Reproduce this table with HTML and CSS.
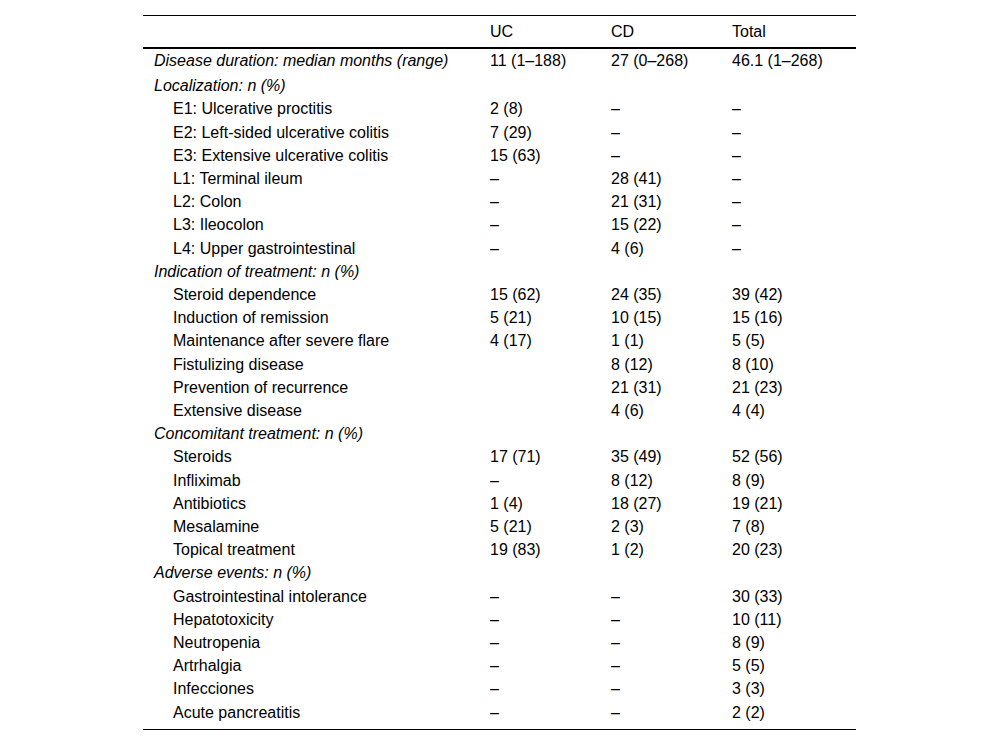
FILE: index.html
```html
<!DOCTYPE html>
<html>
<head>
<meta charset="utf-8">
<link rel="stylesheet" href="styles.css">
</head>
<body>
<div class="wrap">
<table class="data">
<colgroup><col class="c-label"><col class="c-num"><col class="c-num"><col class="c-total"></colgroup>
<thead>
<tr><th></th><th>UC</th><th>CD</th><th>Total</th></tr>
</thead>
<tbody>
<tr class="first"><td class="grp">Disease duration: median months (range)</td><td>11 (1–188)</td><td>27 (0–268)</td><td>46.1 (1–268)</td></tr>
<tr><td class="grp">Localization: n (%)</td><td></td><td></td><td></td></tr>
<tr><td class="sub">E1: Ulcerative proctitis</td><td>2 (8)</td><td>–</td><td>–</td></tr>
<tr><td class="sub">E2: Left-sided ulcerative colitis</td><td>7 (29)</td><td>–</td><td>–</td></tr>
<tr><td class="sub">E3: Extensive ulcerative colitis</td><td>15 (63)</td><td>–</td><td>–</td></tr>
<tr><td class="sub">L1: Terminal ileum</td><td>–</td><td>28 (41)</td><td>–</td></tr>
<tr><td class="sub">L2: Colon</td><td>–</td><td>21 (31)</td><td>–</td></tr>
<tr><td class="sub">L3: Ileocolon</td><td>–</td><td>15 (22)</td><td>–</td></tr>
<tr><td class="sub">L4: Upper gastrointestinal</td><td>–</td><td>4 (6)</td><td>–</td></tr>
<tr><td class="grp">Indication of treatment: n (%)</td><td></td><td></td><td></td></tr>
<tr><td class="sub">Steroid dependence</td><td>15 (62)</td><td>24 (35)</td><td>39 (42)</td></tr>
<tr><td class="sub">Induction of remission</td><td>5 (21)</td><td>10 (15)</td><td>15 (16)</td></tr>
<tr><td class="sub">Maintenance after severe flare</td><td>4 (17)</td><td>1 (1)</td><td>5 (5)</td></tr>
<tr><td class="sub">Fistulizing disease</td><td></td><td>8 (12)</td><td>8 (10)</td></tr>
<tr><td class="sub">Prevention of recurrence</td><td></td><td>21 (31)</td><td>21 (23)</td></tr>
<tr><td class="sub">Extensive disease</td><td></td><td>4 (6)</td><td>4 (4)</td></tr>
<tr><td class="grp">Concomitant treatment: n (%)</td><td></td><td></td><td></td></tr>
<tr><td class="sub">Steroids</td><td>17 (71)</td><td>35 (49)</td><td>52 (56)</td></tr>
<tr><td class="sub">Infliximab</td><td>–</td><td>8 (12)</td><td>8 (9)</td></tr>
<tr><td class="sub">Antibiotics</td><td>1 (4)</td><td>18 (27)</td><td>19 (21)</td></tr>
<tr><td class="sub">Mesalamine</td><td>5 (21)</td><td>2 (3)</td><td>7 (8)</td></tr>
<tr><td class="sub">Topical treatment</td><td>19 (83)</td><td>1 (2)</td><td>20 (23)</td></tr>
<tr><td class="grp">Adverse events: n (%)</td><td></td><td></td><td></td></tr>
<tr><td class="sub">Gastrointestinal intolerance</td><td>–</td><td>–</td><td>30 (33)</td></tr>
<tr><td class="sub">Hepatotoxicity</td><td>–</td><td>–</td><td>10 (11)</td></tr>
<tr><td class="sub">Neutropenia</td><td>–</td><td>–</td><td>8 (9)</td></tr>
<tr><td class="sub">Artrhalgia</td><td>–</td><td>–</td><td>5 (5)</td></tr>
<tr><td class="sub">Infecciones</td><td>–</td><td>–</td><td>3 (3)</td></tr>
<tr class="last"><td class="sub">Acute pancreatitis</td><td>–</td><td>–</td><td>2 (2)</td></tr>
</tbody>
</table>
</div>
</body>
</html>
```
FILE: styles.css
```css
html, body {
  margin: 0;
  padding: 0;
  background: #fff;
}
body {
  font-family: "Liberation Sans", Arial, sans-serif;
  font-size: 16px;
  color: #000;
}
.wrap {
  padding-top: 15px;
  display: flex;
  justify-content: center;
}
.data {
  width: 713px;
  margin-left: -1px;
  border-collapse: collapse;
  table-layout: fixed;
}
.c-label { width: 337px; }
.c-num { width: 121px; }
.c-total { width: 134px; }
.data thead tr {
  border-top: 1px solid #000;
  border-bottom: 2px solid #000;
}
.data th {
  font-weight: normal;
  text-align: left;
  height: 31px;
  padding: 0 10px;
  line-height: 18px;
  vertical-align: middle;
}
.data td {
  padding: 3px 10px 3px 10px;
  line-height: 17.2px;
  text-align: left;
  white-space: nowrap;
  vertical-align: middle;
}
.data tr.first td {
  padding-top: 3px;
  padding-bottom: 5px;
}
.data tr.last {
  border-bottom: 1px solid #000;
}
.data tr.last td {
  padding-bottom: 8px;
}
.data td.grp {
  font-style: italic;
  padding-left: 11px;
}
.data td.sub {
  padding-left: 30px;
}
```
